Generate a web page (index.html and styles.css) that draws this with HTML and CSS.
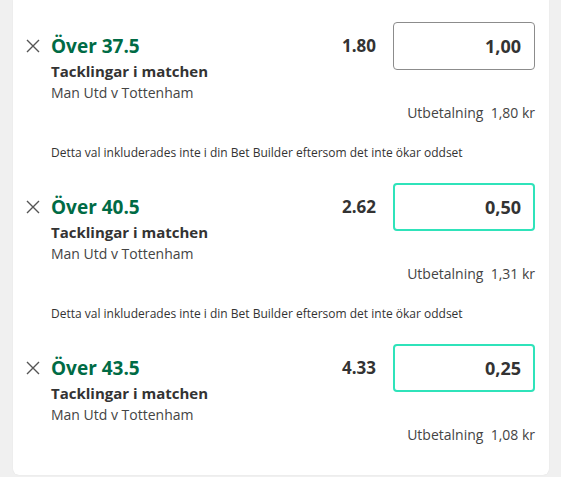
FILE: index.html
```html
<!DOCTYPE html>
<html lang="sv">
<head>
<meta charset="utf-8">
<title>Bet Builder</title>
<link rel="stylesheet" href="styles.css">
</head>
<body>
<div class="card">
  <div class="bet bet-first">
    <div class="bet-top">
      <span class="remove"><svg width="14" height="14" viewBox="0 0 14 14"><path d="M1 1L13 13M13 1L1 13" stroke="#555" stroke-width="1.4" fill="none"/></svg></span>
      <div class="info">
        <div class="title">Över 37.5</div>
        <div class="market">Tacklingar i matchen</div>
        <div class="event">Man Utd v Tottenham</div>
      </div>
      <div class="odds">1.80</div>
      <div class="stake">1,00</div>
    </div>
    <div class="payout">Utbetalning&nbsp; 1,80 kr</div>
    <div class="notice">Detta val inkluderades inte i din Bet Builder eftersom det inte ökar oddset</div>
  </div>
  <div class="bet">
    <div class="bet-top">
      <span class="remove"><svg width="14" height="14" viewBox="0 0 14 14"><path d="M1 1L13 13M13 1L1 13" stroke="#555" stroke-width="1.4" fill="none"/></svg></span>
      <div class="info">
        <div class="title">Över 40.5</div>
        <div class="market">Tacklingar i matchen</div>
        <div class="event">Man Utd v Tottenham</div>
      </div>
      <div class="odds">2.62</div>
      <div class="stake stake-active">0,50</div>
    </div>
    <div class="payout">Utbetalning&nbsp; 1,31 kr</div>
    <div class="notice">Detta val inkluderades inte i din Bet Builder eftersom det inte ökar oddset</div>
  </div>
  <div class="bet bet-last">
    <div class="bet-top">
      <span class="remove"><svg width="14" height="14" viewBox="0 0 14 14"><path d="M1 1L13 13M13 1L1 13" stroke="#555" stroke-width="1.4" fill="none"/></svg></span>
      <div class="info">
        <div class="title">Över 43.5</div>
        <div class="market">Tacklingar i matchen</div>
        <div class="event">Man Utd v Tottenham</div>
      </div>
      <div class="odds">4.33</div>
      <div class="stake stake-active">0,25</div>
    </div>
    <div class="payout">Utbetalning&nbsp; 1,08 kr</div>
  </div>
</div>
</body>
</html>
```
FILE: styles.css
```css
html, body {
  margin: 0;
  padding: 0;
}
body {
  background: #f0f0f0;
  font-family: "Open Sans", "Noto Sans", "Liberation Sans", sans-serif;
  color: #333;
  height: 477px;
  overflow: hidden;
}
.card {
  margin-left: 13px;
  width: 536px;
  background: #fff;
  border-radius: 0 0 6px 6px;
  box-shadow: 0 0 1px rgba(0,0,0,0.12);
  padding: 0 14px 0 13px;
  box-sizing: border-box;
  height: 475px;
}
.bet {
  padding-top: 20px;
}
.bet-first {
  padding-top: 22px;
}
.bet-top {
  display: flex;
  align-items: flex-start;
}
.remove {
  width: 14px;
  height: 14px;
  margin-top: 17px;
  margin-right: 11px;
  display: flex;
}
.info {
  flex: 1;
  padding-top: 12px;
}
.title {
  font-size: 19px;
  font-weight: 700;
  color: #006b45;
  line-height: 24px;
}
.market {
  font-size: 15px;
  font-weight: 700;
  line-height: 22px;
  margin-top: 2px;
  color: #333;
}
.event {
  font-size: 14px;
  line-height: 22px;
  color: #444;
}
.odds {
  font-size: 17px;
  font-weight: 700;
  line-height: 48px;
  margin-right: 17px;
}
.stake {
  width: 142px;
  height: 48px;
  box-sizing: border-box;
  border: 1px solid #8c8c8c;
  border-radius: 4px;
  text-align: right;
  padding-right: 13px;
  font-size: 18px;
  font-weight: 700;
  line-height: 46px;
}
.stake-active {
  border: 2px solid #2fe3ba;
  line-height: 44px;
  padding-right: 12px;
}
.payout {
  text-align: right;
  font-size: 14px;
  line-height: 20px;
  margin-top: -1px;
  color: #444;
}
.notice {
  font-size: 12px;
  line-height: 20px;
  margin-top: 20px;
  padding-left: 25px;
  color: #333;
}
```
